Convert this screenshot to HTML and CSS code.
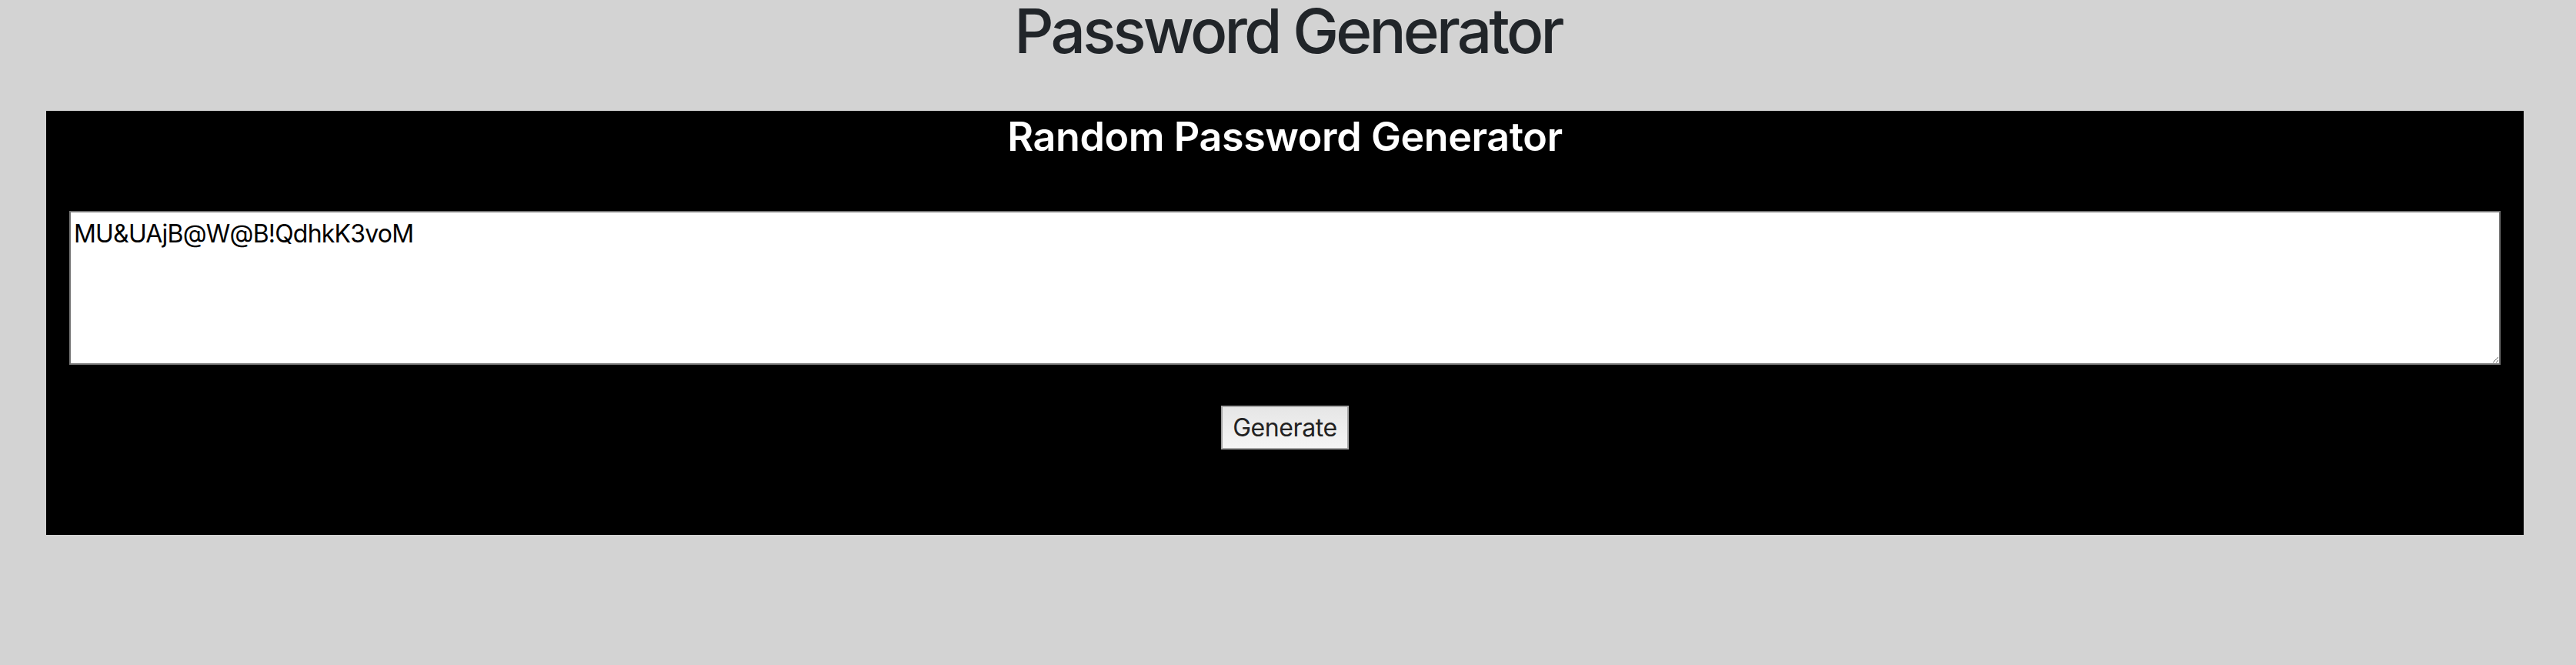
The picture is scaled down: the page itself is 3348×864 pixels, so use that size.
FILE: index.html
```html
<!DOCTYPE html>
<html lang="en">
<head>
<meta charset="utf-8">
<title>Password Generator</title>
<link rel="stylesheet" href="styles.css">
</head>
<body>
  <h1 class="page-title">Password Generator</h1>
  <main class="card">
    <h2 class="card-title">Random Password Generator</h2>
    <textarea class="output" id="password">MU&amp;UAjB@W@B!QdhkK3voM</textarea>
    <div class="actions">
      <button class="btn" type="button">Generate</button>
    </div>
  </main>
</body>
</html>
```
FILE: styles.css
```css
html, body {
  margin: 0;
  padding: 0;
}

body {
  background: #d3d3d3;
  font-family: Inter, "Noto Sans", "Liberation Sans", sans-serif;
  color: #212529;
}

.page-title {
  margin: 0 0 64px;
  font-size: 80px;
  font-weight: 500;
  line-height: 80px;
  letter-spacing: -3.8px;
  text-align: center;
  color: #212529;
}

.card {
  display: block;
  margin: 0 68px 0 60px;
  padding: 0 30px 111px;
  background: #000;
}

.card-title {
  margin: 0;
  padding-top: 3px;
  font-size: 52px;
  font-weight: 600;
  line-height: 62px;
  letter-spacing: -0.4px;
  text-align: center;
  color: #fff;
}

.output {
  display: block;
  box-sizing: border-box;
  width: 100%;
  height: 200px;
  margin: 65px 0 0;
  padding: 4px;
  border: 2px solid #767676;
  background: #fff;
  color: #000;
  font-family: inherit;
  font-size: 32px;
  line-height: 48px;
  letter-spacing: -0.8px;
}

.actions {
  display: flex;
  justify-content: center;
  margin-top: 53px;
}

.btn {
  box-sizing: border-box;
  height: 57px;
  padding: 0 13px;
  border: 2px solid #a6a6a6;
  background: linear-gradient(#e6e6e6, #f5f5f5);
  color: #222;
  font-family: inherit;
  font-size: 32px;
  line-height: 1;
  letter-spacing: -0.4px;
}
```
